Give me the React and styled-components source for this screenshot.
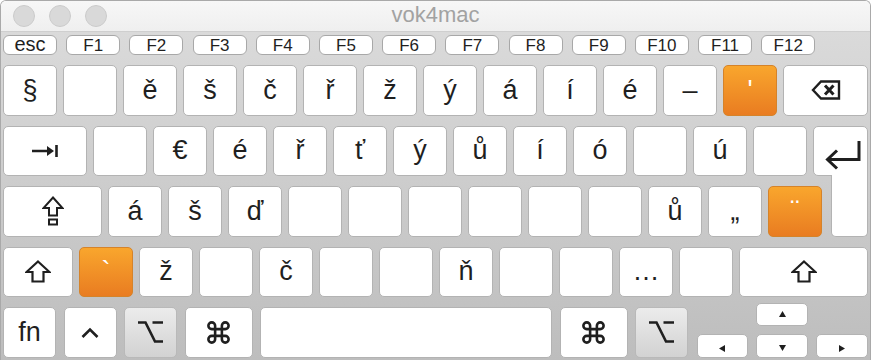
import React from 'react';
import styled, { createGlobalStyle, css } from 'styled-components';
import { Command } from 'lucide-react';

const GlobalStyle = createGlobalStyle`
  html, body {
    margin: 0;
    padding: 0;
    background: #ffffff;
  }
  body {
    font-family: "Liberation Sans", Arial, sans-serif;
  }
`;

const INK = '#1f1f1f';

const Window = styled.div`
  box-sizing: border-box;
  width: 871px;
  height: 360px;
  display: flex;
  flex-direction: column;
  border: 1px solid #a9a9a9;
  border-bottom: none;
  border-radius: 6px 6px 0 0;
  overflow: hidden;
`;

const TitleBar = styled.div`
  box-sizing: border-box;
  height: 31px;
  flex: none;
  display: grid;
  grid-template-columns: 1fr auto 1fr;
  align-items: center;
  padding: 0 12px;
  background: linear-gradient(#f7f7f7, #efefef);
  border-bottom: 1px solid #cfcfcf;
`;

const Lights = styled.div`
  display: flex;
  gap: 14px;
`;

const Light = styled.span`
  width: 20px;
  height: 20px;
  border-radius: 50%;
  background: #d9d9d9;
  border: 1px solid #cbcbcb;
`;

const Title = styled.div`
  font-size: 22px;
  color: #a2a2a2;
  line-height: 1;
  padding-bottom: 2px;
`;

const Board = styled.div`
  flex: 1;
  display: flex;
  flex-direction: column;
  gap: 10px;
  padding: 3px 2px 0 2px;
  background: linear-gradient(#dadada, #bdbdbd);
`;

const FRow = styled.div`
  display: flex;
  gap: 9.2px;
  height: 20px;
`;

const FKey = styled.div`
  box-sizing: border-box;
  width: 54px;
  display: flex;
  align-items: center;
  justify-content: center;
  background: #ffffff;
  border: 1px solid #a8a8a8;
  border-radius: 6px;
  color: ${INK};
  font-size: ${(p) => (p.$big ? '20px' : '17px')};
  line-height: 1;
  padding-bottom: ${(p) => (p.$big ? '2px' : '0')};
`;

const Row = styled.div`
  display: flex;
  gap: ${(p) => p.$gap || 6}px;
  height: 50.5px;
`;

const tones = {
  white: css`
    background: #ffffff;
    border-color: #b3b3b3;
    color: ${INK};
  `,
  orange: css`
    background: linear-gradient(#f9a62d, #e97c21);
    border-color: #d5832a;
    color: #ffffff;
  `,
  grey: css`
    background: linear-gradient(#ececec, #d2d2d2);
    border-color: #b9b9b9;
    color: ${INK};
  `,
};

const Key = styled.div`
  box-sizing: border-box;
  flex: ${(p) => (p.$w ? `0 0 ${p.$w}px` : '1 1 0')};
  display: flex;
  align-items: center;
  justify-content: center;
  border: 1px solid;
  border-radius: 5px;
  font-size: 27px;
  line-height: 1;
  ${(p) => tones[p.$tone || 'white']}
`;

const ReturnTop = styled(Key)`
  border-bottom-right-radius: 0;
  justify-content: flex-end;
  padding-right: 5px;
  align-items: flex-start;
  padding-top: 13px;
`;

const ReturnBottom = styled(Key)`
  margin-top: -11px;
  margin-left: 3px;
  border-top: none;
  border-radius: 0 0 5px 5px;
`;

const Arrows = styled.div`
  flex: 1;
  display: flex;
  flex-direction: column;
  gap: 8px;
  margin-top: -4px;
  margin-left: 1px;
`;

const ArrowRow = styled.div`
  display: flex;
  gap: 8px;
  flex: ${(p) => (p.$top ? '0 0 23px' : '1')};
  justify-content: center;
`;

const ArrowKey = styled(Key)`
  border-radius: 5px;
  align-items: ${(p) => (p.$low ? 'flex-end' : 'center')};
  padding-bottom: ${(p) => (p.$low ? '5px' : '0')};
  ${(p) => p.$lone && 'flex: 0 0 52px;'}
`;

const Icon = ({ w, h, children, sw = 2.4 }) => (
  <svg width={w} height={h} viewBox={`0 0 ${w} ${h}`} fill="none" stroke={INK} strokeWidth={sw} strokeLinejoin="miter" strokeLinecap="butt">
    {children}
  </svg>
);

const Backspace = () => (
  <Icon w={30} h={22}>
    <path d="M2 11 L10 2.5 H28 V19.5 H10 Z" />
    <path d="M14 6.5 L22.5 15.5 M22.5 6.5 L14 15.5" strokeWidth={3} />
  </Icon>
);

const Tab = () => (
  <Icon w={27} h={14}>
    <path d="M0 7 H17" />
    <path d="M15 2 L22 7 L15 12 Z" fill={INK} stroke="none" />
    <path d="M24.5 1 V13" strokeWidth={2.6} />
  </Icon>
);

const Caps = () => (
  <Icon w={22} h={31} sw={2}>
    <path d="M11 1.5 L20.5 12 H15 V19.5 H7 V12 H1.5 Z" />
    <path d="M7 23.5 H15 V28.5 H7 Z" />
  </Icon>
);

const Shift = () => (
  <Icon w={26} h={23} sw={2.2}>
    <path d="M13 1.5 L24.5 12 H18.5 V21.5 H7.5 V12 H1.5 Z" />
  </Icon>
);

const Return = () => (
  <Icon w={38} h={31} sw={3}>
    <path d="M35 1 V19.5 H4" />
    <path d="M13 10.5 L3.5 19.5 L13 28.5" />
  </Icon>
);

const Ctrl = () => (
  <Icon w={18} h={11} sw={2.6}>
    <path d="M1.5 10 L9 2.5 L16.5 10" />
  </Icon>
);

const Option = () => (
  <Icon w={27} h={24} sw={2.6}>
    <path d="M1 2.5 H8.5 L18 21.5 H26 M15.5 2.5 H26" />
  </Icon>
);

const Cmd = () => <Command size={27} color={INK} strokeWidth={2.3} />;

const Tri = ({ dir }) => {
  const pts = {
    up: '0,6 3.5,0 7,6',
    down: '0,0 7,0 3.5,6',
    left: '6,0 6,7 0,3.5',
    right: '0,0 0,7 6,3.5',
  }[dir];
  return (
    <svg width="7" height="7" viewBox="0 0 7 7">
      <polygon points={pts} fill={INK} />
    </svg>
  );
};

const fKeys = ['F1', 'F2', 'F3', 'F4', 'F5', 'F6', 'F7', 'F8', 'F9', 'F10', 'F11', 'F12'];

const row1 = ['§', '', 'ě', 'š', 'č', 'ř', 'ž', 'ý', 'á', 'í', 'é', '–', { t: "'", o: true }];
const row2 = ['', '€', 'é', 'ř', 'ť', 'ý', 'ů', 'í', 'ó', '', 'ú', ''];
const row3 = ['á', 'š', 'ď', '', '', '', '', '', '', 'ů', '„', { t: '¨', o: true }];
const row4 = [{ t: '`', o: true }, 'ž', '', 'č', '', '', 'ň', '', '', '…', ''];

const renderKeys = (list) =>
  list.map((k, i) => {
    const label = typeof k === 'string' ? k : k.t;
    const tone = typeof k === 'string' ? 'white' : 'orange';
    return (
      <Key key={i} $w={54} $tone={tone}>
        {label}
      </Key>
    );
  });

export default function App() {
  return (
    <>
      <GlobalStyle />
      <Window>
        <TitleBar>
          <Lights>
            <Light />
            <Light />
            <Light />
          </Lights>
          <Title>vok4mac</Title>
          <div />
        </TitleBar>
        <Board>
          <FRow>
            <FKey $big>esc</FKey>
            {fKeys.map((f) => (
              <FKey key={f}>{f}</FKey>
            ))}
          </FRow>
          <Row>
            {renderKeys(row1)}
            <Key>
              <Backspace />
            </Key>
          </Row>
          <Row>
            <Key $w={84}>
              <Tab />
            </Key>
            {renderKeys(row2)}
            <ReturnTop>
              <Return />
            </ReturnTop>
          </Row>
          <Row>
            <Key $w={99}>
              <Caps />
            </Key>
            {renderKeys(row3)}
            <ReturnBottom />
          </Row>
          <Row>
            <Key $w={70}>
              <Shift />
            </Key>
            {renderKeys(row4)}
            <Key>
              <Shift />
            </Key>
          </Row>
          <Row $gap={7.5}>
            <Key $w={53}>fn</Key>
            <Key $w={53}>
              <Ctrl />
            </Key>
            <Key $w={53} $tone="grey">
              <Option />
            </Key>
            <Key $w={68}>
              <Cmd />
            </Key>
            <Key $w={292} />
            <Key $w={68}>
              <Cmd />
            </Key>
            <Key $w={53} $tone="grey">
              <Option />
            </Key>
            <Arrows>
              <ArrowRow $top>
                <ArrowKey $lone>
                  <Tri dir="up" />
                </ArrowKey>
              </ArrowRow>
              <ArrowRow>
                <ArrowKey $low>
                  <Tri dir="left" />
                </ArrowKey>
                <ArrowKey $low>
                  <Tri dir="down" />
                </ArrowKey>
                <ArrowKey $low>
                  <Tri dir="right" />
                </ArrowKey>
              </ArrowRow>
            </Arrows>
          </Row>
        </Board>
      </Window>
    </>
  );
}
